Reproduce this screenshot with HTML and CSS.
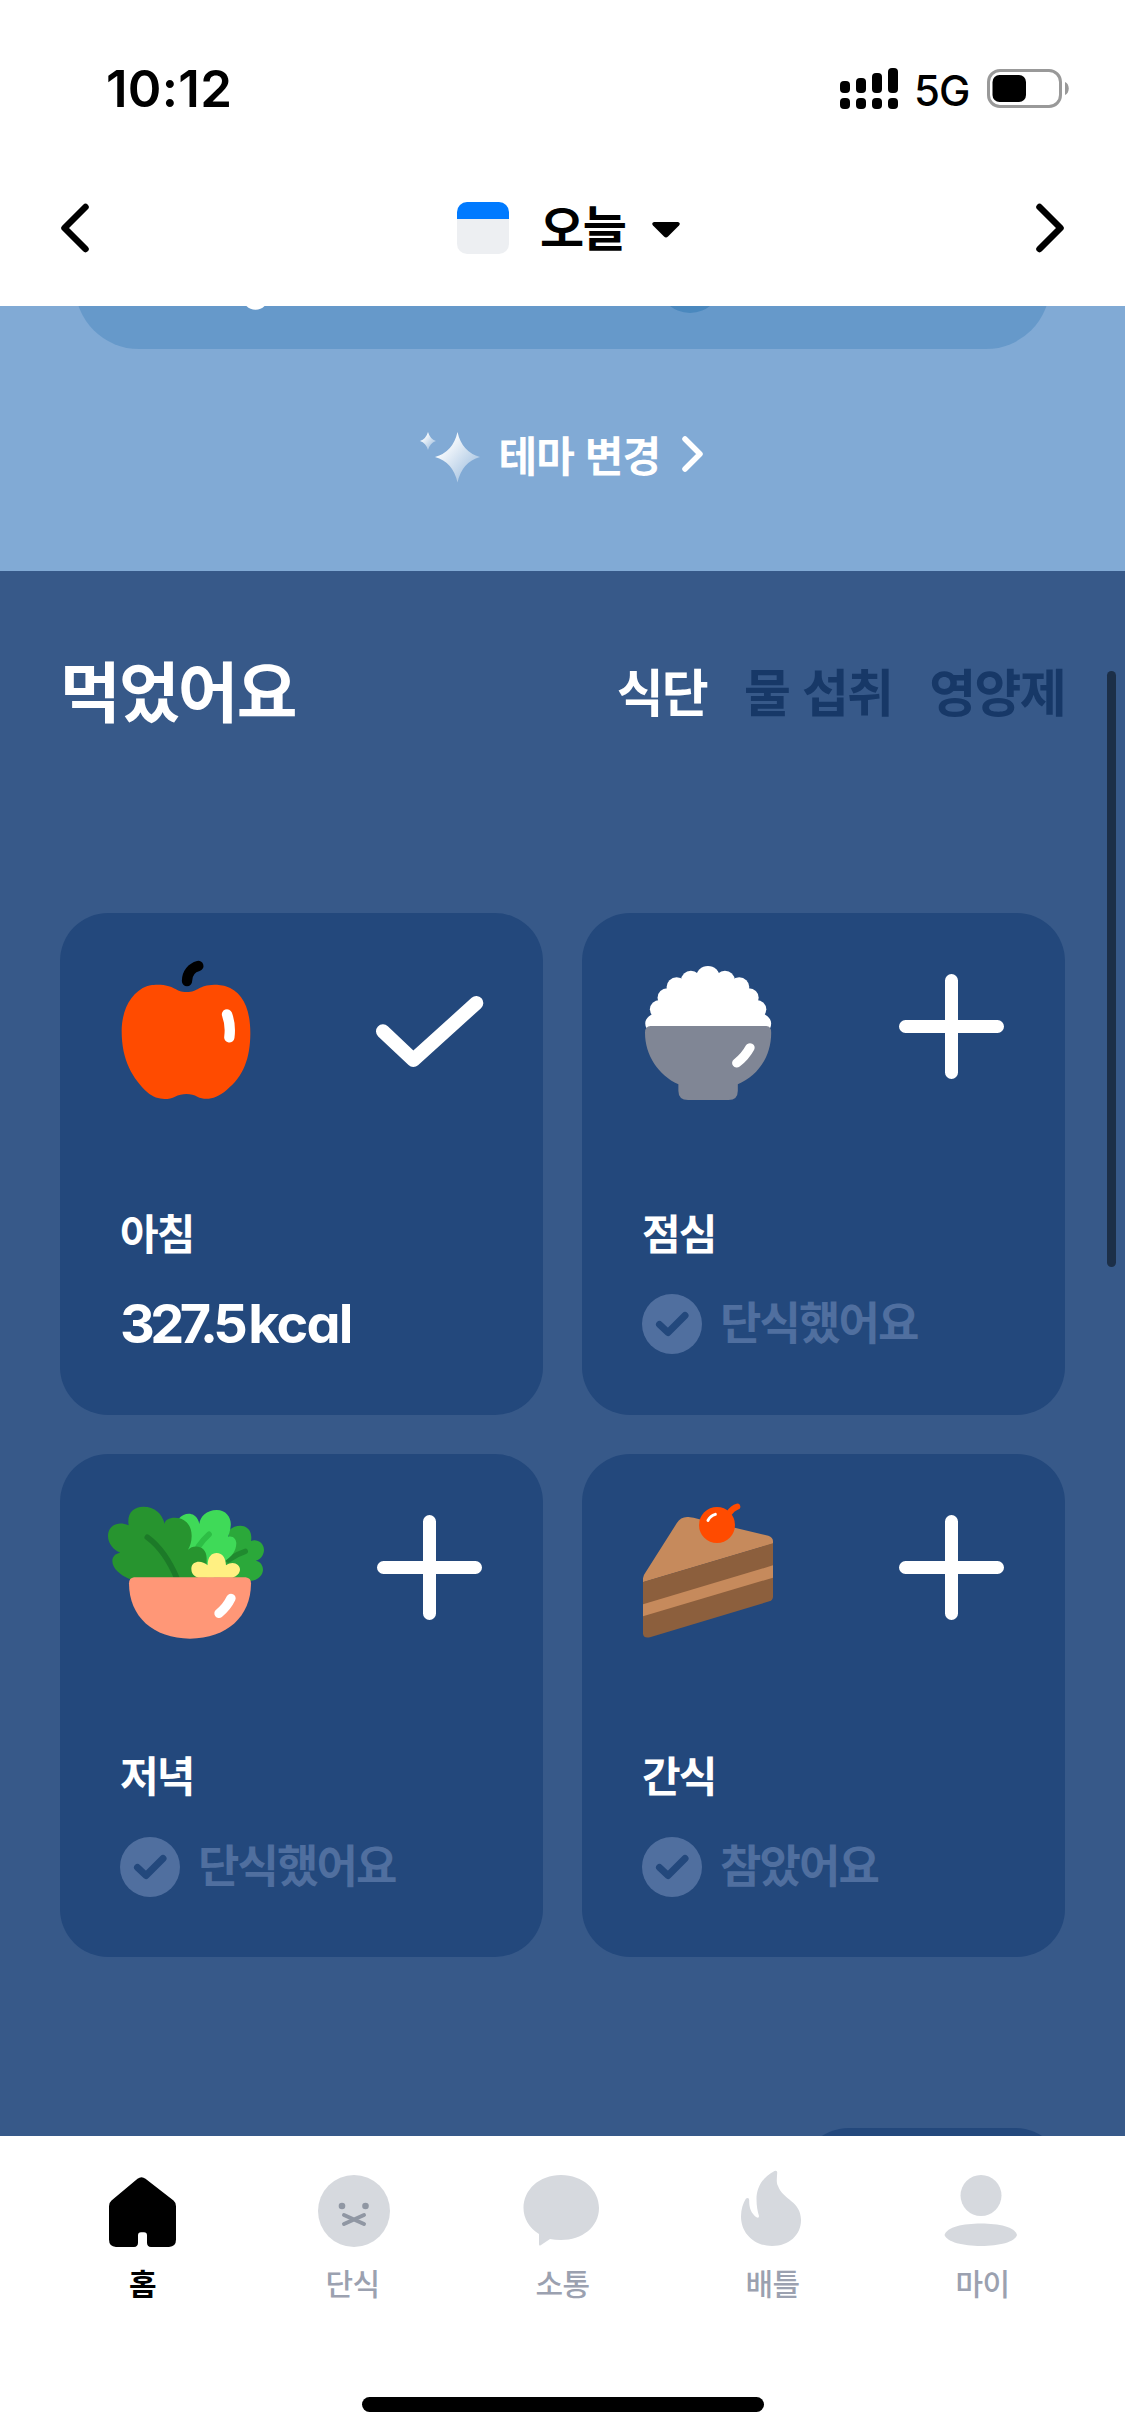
FILE: index.html
```html
<!DOCTYPE html>
<html lang="ko">
<head>
<meta charset="utf-8">
<title>오늘</title>
<link rel="stylesheet" href="styles.css">
</head>
<body>
<div class="screen">
  <div class="status">
    <span class="clock">10:12</span>
    <div class="status-right">
      <svg class="signal" width="58" height="42" viewBox="0 0 58 42">
        <rect x="0" y="13" width="10" height="12" rx="4"/><rect x="16" y="10" width="10" height="15" rx="4"/><rect x="32" y="5" width="10" height="20" rx="4"/><rect x="48" y="0" width="10" height="25" rx="4"/>
        <rect x="0" y="30" width="10" height="11" rx="4"/><rect x="16" y="30" width="10" height="11" rx="4"/><rect x="32" y="30" width="10" height="11" rx="4"/><rect x="48" y="30" width="10" height="11" rx="4"/>
      </svg>
      <span class="network">5G</span>
      <svg class="battery" width="82" height="39" viewBox="0 0 82 39">
        <rect x="1.5" y="1.5" width="72" height="36" rx="11.5" fill="none" stroke="#999" stroke-width="3"/>
        <rect x="5.5" y="6" width="33.5" height="27" rx="7"/>
        <path d="M78 13C83 15 83 24 78 26Z" fill="#999"/>
      </svg>
    </div>
  </div>

  <header class="datebar">
    <svg width="30" height="50" viewBox="0 0 30 50"><path d="M25.500 4L4.500 25L25.500 46" class="chev"/></svg>
    <div class="date">
      <span class="calendar"></span>
      <span class="date-text">오늘</span>
      <svg width="28" height="16" viewBox="0 0 28 16"><path d="M2 0H26Q29 1 27 3.500L16 14.500Q14 16.500 12 14.500L1 3.500Q-1 1 2 0Z"/></svg>
    </div>
    <svg width="30" height="50" viewBox="0 0 30 50"><path d="M4.500 4L25.500 25L4.500 46" class="chev"/></svg>
  </header>

  <section class="hero">
    <svg class="panel" width="975" height="43" viewBox="0 0 975 43">
      <rect y="-90" width="975" height="133" rx="64" fill="#6699ca"/>
      <circle cx="180.500" cy="-9" r="12.800" fill="#fff"/>
      <circle cx="615" cy="-25" r="32" fill="#4a88be"/>
    </svg>
    <div class="theme">
      <svg width="60" height="51" viewBox="0 0 60 51">
        <defs><linearGradient id="shine" x1="0" y1="0" x2="1" y2="1"><stop offset=".2" stop-color="#fff"/><stop offset=".85" stop-color="#a4c2e1"/></linearGradient></defs>
        <path d="M37.500 0Q42 20 60 25Q42 30 37.500 50.500Q33 30 15 25Q33 20 37.500 0Z" fill="url(#shine)"/>
        <path d="M8 0Q10 7 16 9Q10 11 8 18Q6 11 0 9Q6 7 8 0Z" fill="url(#shine)"/>
      </svg>
      <span class="theme-text">테마 변경</span>
      <svg class="theme-arrow" width="21" height="36" viewBox="0 0 21 36"><path d="M3 3L18 18L3 33" class="chev chev-light"/></svg>
    </div>
  </section>

  <main class="meals">
    <div class="meals-head">
      <h1>먹었어요</h1>
      <div class="tabs"><span class="tab on">식단</span><span class="tab">물 섭취</span><span class="tab">영양제</span></div>
    </div>
    <div class="grid">
      <article class="card">
        <div class="card-top">
          <svg class="food" viewBox="120 159 480 450">
            <path fill="#ff4b00" d="M380 276C345 276 345 254 293 254C275 254 265 257 262 258C212 276 185 332 185 393C185 482 218 535 262 577C290 602 325 600 345 590C365 579 395 579 412 590C435 601 465 600 500 570C550 530 571 475 571 400C571 320 545 275 497 259C485 254 465 254 463 254C415 255 415 276 380 276Z"/>
            <path d="M381 243C381 220 396 203 415 198" class="line" stroke="#000" stroke-width="31"/>
            <path d="M501 343Q513 375 508 412" class="line" stroke="#fff" stroke-width="31"/>
          </svg>
          <svg class="action" viewBox="950 222 315 315"><path d="M968 394L1059 480L1248 309" class="line" stroke="#fff" stroke-width="42"/></svg>
        </div>
        <h2>아침</h2>
        <div class="kcal"><span class="amount">327.5</span><span class="unit">kcal</span></div>
      </article>

      <article class="card">
        <div class="card-top">
          <svg class="food" viewBox="120.8 159 460.300 450" preserveAspectRatio="none">
            <g fill="#fff"><circle cx="368" cy="232" r="34"/><circle cx="319" cy="240" r="28"/><circle cx="417" cy="240" r="28"/><circle cx="278" cy="261" r="29"/><circle cx="458" cy="261" r="29"/><circle cx="251" cy="293" r="28"/><circle cx="486" cy="293" r="28"/><circle cx="229" cy="328" r="28"/><circle cx="508" cy="328" r="28"/>
            <path d="M191 384Q180 360 205 344L230 320L300 240H440L510 320L533 344Q557 360 547 384Z"/></g>
            <path fill="#808695" d="M203 378H536Q550 378 550 398C550 470 512 527 454 553V572Q454 600 427 600H311Q283 600 283 572V553C225 525 187 465 187 398Q187 378 203 378Z"/>
            <path d="M489 443Q475 470 451 489" class="line" stroke="#fff" stroke-width="27"/>
          </svg>
          <svg class="action" viewBox="0 0 105 105"><path d="M52.500 6.500V98.500M6.500 52.500H98.500" class="line" stroke="#fff" stroke-width="13"/></svg>
        </div>
        <h2>점심</h2>
        <div class="skip"><svg width="60" height="60" viewBox="0 0 60 60"><circle cx="30" cy="30" r="30"/><path d="M17.500 30.500L26 38.500L43 21.500" class="line"/></svg><span>단식했어요</span></div>
      </article>

      <article class="card low">
        <div class="card-top">
          <svg class="food" viewBox="120 132 480 450">
            <path fill="#2ba83a" d="M508 241C520 228 540 225 552 229C568 235 577 250 573 273C590 266 612 278 612 300C611 318 600 330 587 332C603 335 609 348 609 360C607 380 590 392 570 393L480 385L495 330Z"/>
            <path d="M505 330Q530 312 556 304" class="line" stroke="#208a2f" stroke-width="16"/>
            <path fill="#3fda58" d="M356 206C370 190 390 188 402 196C412 203 416 212 418 222C420 200 440 180 470 180C500 180 515 205 512 228C511 240 508 250 504 260C520 256 529 268 529 280C528 305 515 320 496 332L460 385H380Z"/>
            <path d="M415 290Q428 270 447 253" class="line" stroke="#2dbe45" stroke-width="17"/>
            <path fill="#27942f" d="M210 388C180 375 157 355 157 333C157 318 168 310 181 308C160 300 144 280 144 258C144 230 170 210 206 226C200 190 220 170 250 170C285 170 305 190 314 221C315 210 325 203 345 203C375 203 395 225 395 258C395 275 390 290 384 299C400 282 440 285 440 325V388Z"/>
            <path d="M262 262C300 290 330 335 352 388" class="line" stroke="#1c7a28" stroke-width="17"/>
            <path fill="#fff082" d="M415 383C400 379 394 370 394 355C396 332 425 330 443 346C443 320 455 309 470 309C488 309 497 325 498 346C520 330 540 345 540 358C540 370 530 380 517 383Z"/>
            <path fill="#ff9777" d="M222 382H557Q573 384 573 400C573 500 500 566 390 566C280 566 207 500 207 400Q207 384 222 382Z"/>
            <path d="M513 445Q500 472 477 490" class="line" stroke="#fff" stroke-width="28"/>
          </svg>
          <svg class="action" viewBox="0 0 105 105"><path d="M52.500 6.500V98.500M6.500 52.500H98.500" class="line" stroke="#fff" stroke-width="13"/></svg>
        </div>
        <h2>저녁</h2>
        <div class="skip"><svg width="60" height="60" viewBox="0 0 60 60"><circle cx="30" cy="30" r="30"/><path d="M17.500 30.500L26 38.500L43 21.500" class="line"/></svg><span>단식했어요</span></div>
      </article>

      <article class="card low">
        <div class="card-top">
          <svg class="food" viewBox="126 132 480 450">
            <path fill="#c68a5c" d="M189 397V385Q190 375 196 368L290 220Q303 199 325 201Q340 202 358 208L565 257Q579 262 579 273V281Z"/>
            <path fill="#8c5f3d" d="M189 396L579 280V440Q579 450 568 454L210 562Q189 566 189 550Z"/>
            <path fill="#c68a5c" d="M189 463L579 346V383L189 499Z"/>
            <path d="M447 190Q458 174 472 170" class="line" stroke="#ff4b00" stroke-width="18"/>
            <circle cx="411" cy="225" r="54" fill="#ff4b00"/>
            <path d="M384 211Q391 197 406 193" class="line" stroke="#fff" stroke-width="9"/>
          </svg>
          <svg class="action" viewBox="0 0 105 105"><path d="M52.500 6.500V98.500M6.500 52.500H98.500" class="line" stroke="#fff" stroke-width="13"/></svg>
        </div>
        <h2>간식</h2>
        <div class="skip"><svg width="60" height="60" viewBox="0 0 60 60"><circle cx="30" cy="30" r="30"/><path d="M17.500 30.500L26 38.500L43 21.500" class="line"/></svg><span>참았어요</span></div>
      </article>
    </div>
    <div class="peek"></div>
    <div class="scrollbar"></div>
  </main>

  <nav class="nav">
    <div class="nav-item on">
      <svg viewBox="98 2168 90 84"><path fill="#000" d="M137.500 2181.500Q141.500 2178.500 145.500 2181.500L173.500 2202.500Q176 2204.500 176 2208V2240Q176 2247 169 2247H151Q147 2247 147 2243V2236Q147 2233 144 2233H141Q138 2233 138 2236V2243Q138 2247 134 2247H116Q109 2247 109 2240V2208Q109 2204.500 111.500 2202.500Z" transform="matrix(1 0 0 1.040 0 -90)"/></svg>
      <span>홈</span>
    </div>
    <div class="nav-item">
      <svg viewBox="308 2168 90 84"><circle cx="354" cy="2211" r="36"/><g fill="#9097a3"><circle cx="342" cy="2206" r="3.300"/><circle cx="365.500" cy="2206" r="3.300"/></g><path d="M344 2215L364 2224M364 2215L344 2224" class="line" stroke="#9097a3" stroke-width="4"/></svg>
      <span>단식</span>
    </div>
    <div class="nav-item">
      <svg viewBox="518 2168 90 84"><path d="M561 2175C583 2175 599 2190 599 2208C599 2227 582 2240 561 2240Q555 2240 550 2239L541 2245Q539 2246.500 539 2244V2234C529 2228 523.500 2218 523.500 2208C523.500 2190 539 2175 561 2175Z"/></svg>
      <span>소통</span>
    </div>
    <div class="nav-item">
      <svg viewBox="728 2168 90 84"><path d="M774.500 2171Q777.500 2170 777.200 2173C777 2178 776 2182 778 2186C783 2200 801 2201 801 2220C801 2235 789 2246 772 2246C754 2246 741 2233 741 2216.500C741 2209 743 2203 746 2198.500Q749 2197 749.200 2200C749 2208 751 2213 756 2217Q759 2219 759 2216C757.500 2211 756.500 2206 756.500 2199C756.500 2187 763 2177 774.500 2171Z"/></svg>
      <span>배틀</span>
    </div>
    <div class="nav-item">
      <svg viewBox="938 2168 90 84"><circle cx="981" cy="2195.500" r="20.500"/><path d="M944.500 2235C947 2227 963 2223.500 981 2223.500S1015 2227 1017 2235C1015 2242 999 2246 981 2246S947 2242 944.500 2235Z"/></svg>
      <span>마이</span>
    </div>
  </nav>
  <div class="home-indicator"></div>
</div>
</body>
</html>
```
FILE: styles.css
```css
* { box-sizing: border-box; margin: 0; padding: 0; }
body { width: 1125px; background: #fff; font-family: "Noto Sans CJK KR", sans-serif; color: #000; }
svg { display: block; flex: none; }
.screen { width: 1125px; height: 2436px; overflow: hidden; display: flex; flex-direction: column; }
.line { fill: none; stroke-linecap: round; stroke-linejoin: round; }
.chev { fill: none; stroke: #000; stroke-width: 6.500; stroke-linecap: round; stroke-linejoin: round; }
.chev-light { stroke: #fff; stroke-width: 5.500; }

.status { height: 156px; padding: 59px 56px 0 106px; display: flex; justify-content: space-between; align-items: flex-start; font-family: Inter, sans-serif; }
.clock { font-size: 51px; font-weight: 600; line-height: 60px; letter-spacing: 0.300px; }
.status-right { display: flex; padding-top: 9px; }
.network { margin-left: 16px; width: 73px; font-size: 42px; line-height: 45px; font-weight: 500; letter-spacing: -1px; }
.battery { margin-top: 1px; }

.datebar { height: 150px; padding: 0 60px 6px; display: flex; align-items: center; justify-content: space-between; }
.date { display: flex; align-items: center; margin-left: 12px; }
.calendar { width: 52px; height: 52px; border-radius: 10px; background: linear-gradient(#007aff 17px, #edeff2 17px); }
.date-text { width: 87px; margin: 0 25px 7px 31px; font-size: 48px; font-weight: 700; line-height: 60px; white-space: nowrap; letter-spacing: -1.500px; }
.date svg { margin-top: 3px; }

.hero { height: 265px; background: #81aad5; display: flex; flex-direction: column; align-items: center; }
.theme { margin: 83px 3px 0 0; display: flex; align-items: center; }
.theme-text { width: 163px; margin: -8px 20px 0 19px; font-size: 42px; font-weight: 700; line-height: 50px; color: #fff; white-space: nowrap; letter-spacing: -0.900px; }
.theme-arrow { margin-top: -7px; }

.meals { position: relative; height: 1565px; background: #375989; padding: 82px 60px 0; overflow: hidden; flex: none; }
.meals-head { height: 260px; display: flex; justify-content: space-between; align-items: flex-start; color: #fff; }
h1 { font-size: 66px; line-height: 70px; font-weight: 700; letter-spacing: -1.800px; }
.tabs { display: flex; gap: 37px; padding-top: 5px; }
.tab { font-size: 51px; line-height: 64px; font-weight: 700; color: #173867; letter-spacing: -1.700px; white-space: nowrap; }
.tab.on { color: #fff; }

.grid { display: grid; grid-template-columns: 483px 483px; grid-template-rows: 502px 503px; gap: 39px; }
.card { background: #23487c; border-radius: 48px; padding: 40px 61px 0 60px; color: #fff; }
.card-top { height: 251px; display: flex; justify-content: space-between; align-items: flex-start; }
.low .card-top { height: 252px; }
.food { width: 160px; height: 150px; margin-left: -20px; overflow: visible; }
.action { width: 105px; height: 105px; margin-top: 21px; overflow: visible; }
h2 { font-size: 42px; line-height: 56px; font-weight: 700; letter-spacing: -2px; }
.kcal { display: flex; margin-top: 31px; line-height: 66px; font-family: Inter, sans-serif; font-size: 54px; font-weight: 700; font-feature-settings: "cv11", "ss03"; }
.amount { letter-spacing: -4.500px; margin-right: 5px; }
.unit { letter-spacing: -1.800px; }
.skip { display: flex; align-items: center; gap: 18px; margin-top: 34px; color: #506f9f; }
.low .skip { margin-top: 35px; }
.skip circle { fill: #506f9f; }
.skip path { stroke: #23487c; stroke-width: 7; }
.skip span { font-size: 45px; line-height: 56px; margin-top: -6px; font-weight: 700; letter-spacing: -1.900px; }
.peek { position: absolute; left: 799px; top: 1557px; width: 266px; height: 120px; border-radius: 50px; background: #23487c; }
.scrollbar { position: absolute; left: 1107px; top: 100px; width: 9px; height: 596px; border-radius: 5px; background: #1c2f48; }

.nav { height: 240px; padding: 32px 37.500px 0; display: grid; grid-template-columns: repeat(5, 1fr); }
.nav-item { display: flex; flex-direction: column; align-items: center; color: #9ba1b0; font-size: 30px; line-height: 40px; font-weight: 500; letter-spacing: -0.500px; }
.nav-item svg { width: 90px; height: 84px; fill: #d6d9de; margin-bottom: 10px; }
.nav-item.on { color: #000; font-weight: 700; }
.home-indicator { width: 402px; height: 15px; margin: 21px auto 0; border-radius: 8px; background: #000; flex: none; }
```
